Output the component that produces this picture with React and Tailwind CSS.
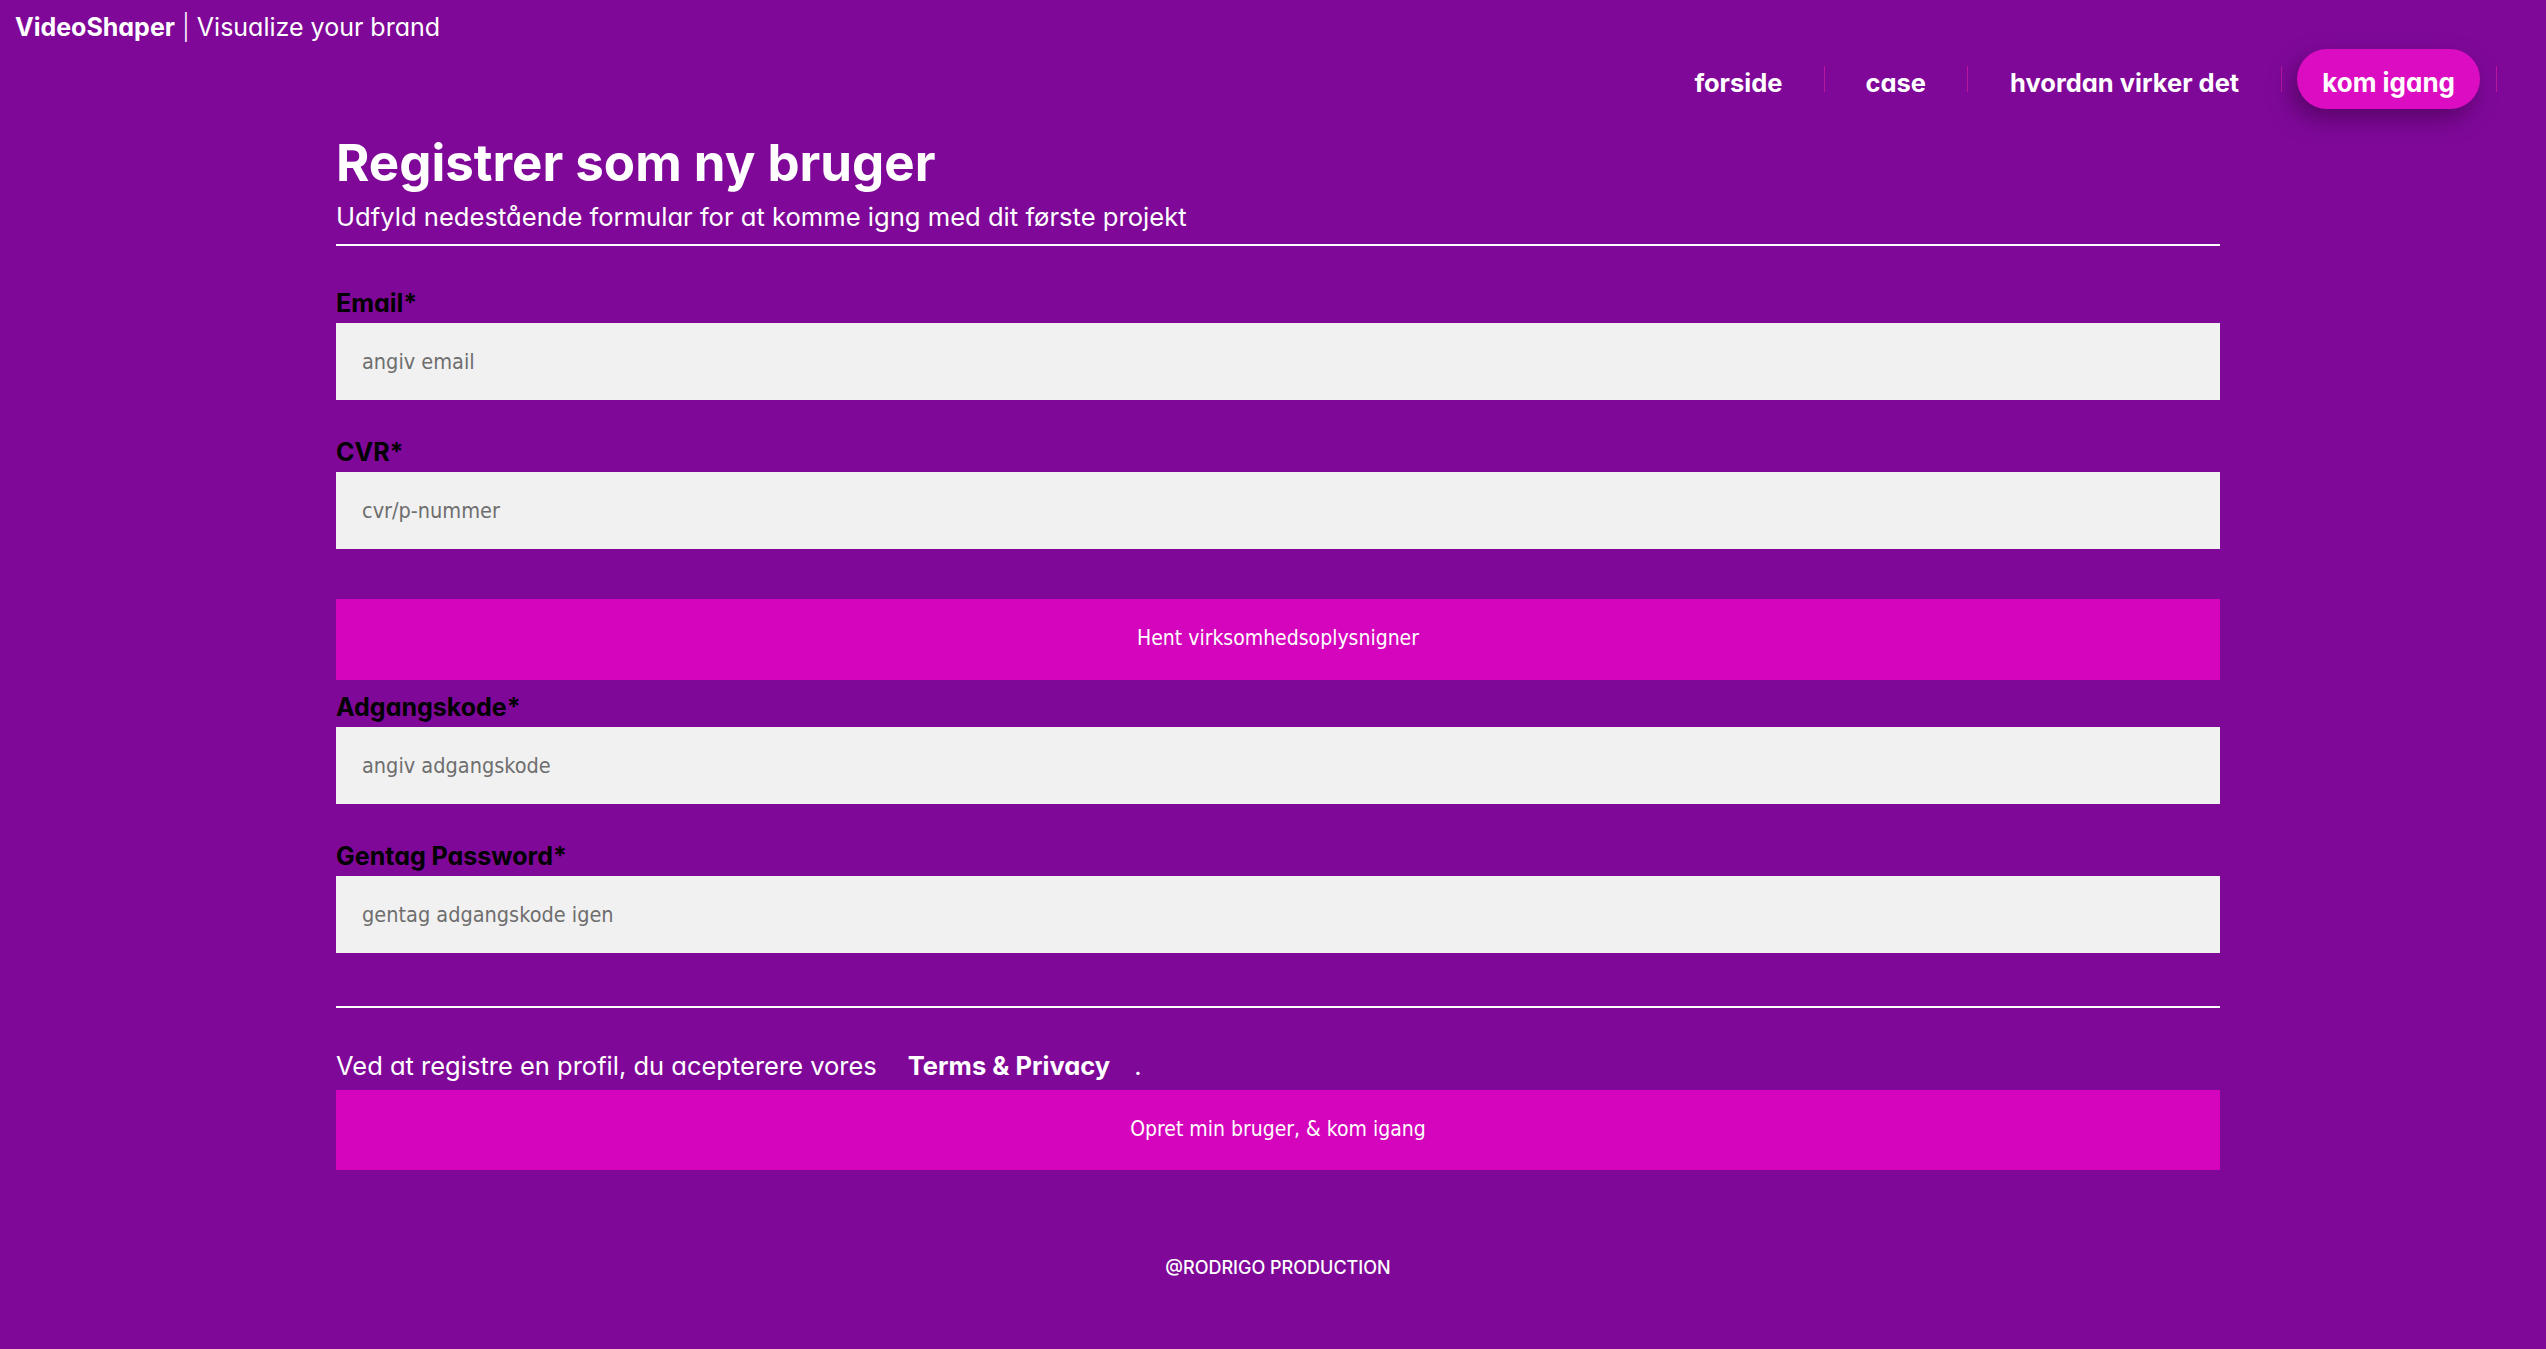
export default function App() {
  const cond =
    "font-['DejaVu_Sans_Condensed','DejaVu_Sans',sans-serif] [font-stretch:condensed]";
  const Sep = () => <span className="block w-px h-[26px] bg-[#b8169f]" />;
  const Field = ({ label, placeholder, type = "text", cls = "" }) => (
    <div className={cls}>
      <label className="block text-[25px] leading-none font-bold text-black mb-[7px]">
        {label}
      </label>
      <input
        type={type}
        placeholder={placeholder}
        className={`block w-full h-[77px] bg-[#f1f1f1] pl-[26px] text-[21.5px] text-[#333] placeholder:text-[#6e6e6e] outline-none border-0 ${cond}`}
      />
    </div>
  );
  return (
    <div className="min-h-screen bg-[#7f0899] text-white font-['Inter','Liberation_Sans',sans-serif] [font-feature-settings:'cv11']">
      <header className="pt-[15px]">
        <div className="pl-[15px] text-[25px] leading-none whitespace-nowrap">
          <span className="font-bold">VideoShaper</span>
          <span className="font-light"> | </span>
          <span>Visualize your brand</span>
        </div>
        <nav className="mt-[9px] flex justify-end items-center pr-[49px] h-[60px]">
          <a className="pl-[42px] pr-[42px] text-[25.5px] font-bold leading-none pt-[8px]">forside</a>
          <Sep />
          <a className="pl-[40px] pr-[41px] text-[25.5px] font-bold leading-none pt-[8px]">case</a>
          <Sep />
          <a className="pl-[42px] pr-[42px] text-[25.5px] font-bold leading-none pt-[8px]">hvordan virker det</a>
          <Sep />
          <a className="ml-[15px] mr-[16px] h-[60px] px-[25px] rounded-full bg-[#dc0cc2] flex items-center text-[26px] font-bold leading-none pt-[8px] shadow-[-6px_10px_22px_rgba(60,0,70,0.55)]">
            kom igang
          </a>
          <Sep />
        </nav>
      </header>
      <main className="pl-[10px]">
        <div className="mx-auto w-[1884px]">
          <h1 className="mt-[28px] text-[51px] leading-none font-bold">Registrer som ny bruger</h1>
          <p className="mt-[16px] text-[25.6px] leading-none">
            Udfyld nedestående formular for at komme igng med dit første projekt
          </p>
          <div className="mt-[14px] h-[2px] bg-white" />
          <form onSubmit={(e) => e.preventDefault()}>
            <Field cls="mt-[45px]" label="Email*" placeholder="angiv email" type="email" />
            <Field cls="mt-[40px]" label="CVR*" placeholder="cvr/p-nummer" />
            <button
              type="button"
              className={`mt-[50px] block w-full h-[81px] bg-[#d505bd] text-white text-[21px] ${cond}`}
            >
              Hent virksomhedsoplysnigner
            </button>
            <Field cls="mt-[15px]" label="Adgangskode*" placeholder="angiv adgangskode" type="password" />
            <Field cls="mt-[40px]" label="Gentag Password*" placeholder="gentag adgangskode igen" type="password" />
            <div className="mt-[53px] h-[2px] bg-white" />
            <p className="mt-[45px] text-[25.5px] leading-none whitespace-nowrap">
              Ved at registre en profil, du acepterere vores
              <a className="ml-[31px] font-bold">Terms &amp; Privacy</a>
              <span className="ml-[24px]">.</span>
            </p>
            <button
              type="submit"
              className={`mt-[12px] block w-full h-[80px] bg-[#d505bd] text-white text-[21px] ${cond}`}
            >
              Opret min bruger, &amp; kom igang
            </button>
          </form>
          <footer className="mt-[89px] pb-[40px] text-center text-[18px] leading-none font-medium uppercase">
            @Rodrigo Production
          </footer>
        </div>
      </main>
    </div>
  );
}
